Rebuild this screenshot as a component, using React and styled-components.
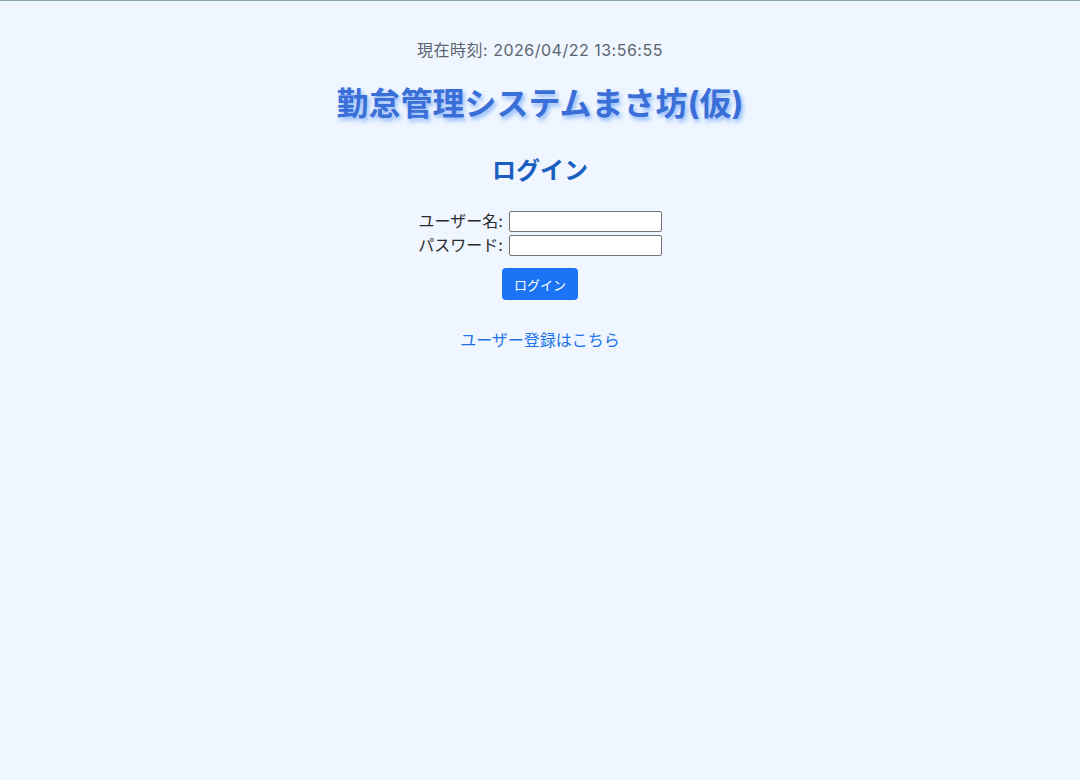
import React from "react";
import styled, { createGlobalStyle } from "styled-components";

const GlobalStyle = createGlobalStyle`
  html, body {
    margin: 0;
    padding: 0;
    background: #eff6ff;
  }
  body {
    font-family: Inter, "Noto Sans CJK JP", sans-serif;
    color: #222;
    border-top: 1px solid #8aa4ad;
    min-height: 779px;
  }
`;

const Page = styled.main`
  display: flex;
  flex-direction: column;
  align-items: center;
  padding-top: 37px;
  text-align: center;
`;

const Clock = styled.p`
  margin: 0;
  font-size: 16px;
  line-height: 24px;
  letter-spacing: 0.5px;
  color: #5b6470;
`;

const Title = styled.h1`
  margin: 20px 0 0;
  font-size: 32px;
  line-height: 44px;
  font-weight: 700;
  color: #3a6fd8;
  text-shadow: 2px 3px 4px rgba(59, 130, 246, 0.55);
`;

const Heading = styled.h2`
  margin: 29px 0 0;
  font-size: 24px;
  line-height: 32px;
  font-weight: 700;
  color: #1a5fbf;
`;

const Form = styled.form`
  display: flex;
  flex-direction: column;
  align-items: center;
  margin-top: 24px;
`;

const Fields = styled.div`
  display: grid;
  grid-template-columns: auto auto;
  column-gap: 6px;
  row-gap: 3px;
  align-items: center;
`;

const Label = styled.label`
  font-size: 16px;
  line-height: 21px;
  text-align: right;
  color: #2a2a2a;
`;

const Input = styled.input`
  box-sizing: border-box;
  width: 153px;
  height: 21px;
  margin: 0;
  padding: 1px 2px;
  border: 1px solid #767676;
  border-radius: 2px;
  background: #fff;
  font: inherit;
  font-size: 13px;
`;

const Button = styled.button`
  margin-top: 12px;
  width: 76px;
  height: 32px;
  border: none;
  border-radius: 4px;
  background: #1b74f6;
  color: #fff;
  font-family: inherit;
  font-size: 13px;
  cursor: pointer;
`;

const RegisterLink = styled.a`
  margin-top: 28px;
  font-size: 16px;
  line-height: 24px;
  color: #1c72e8;
  text-decoration: none;
`;

export default function App() {
  const now = "2026/04/22 13:56:55";

  return (
    <>
      <GlobalStyle />
      <Page>
        <Clock>現在時刻: {now}</Clock>
        <Title>勤怠管理システムまさ坊(仮)</Title>
        <Heading>ログイン</Heading>
        <Form onSubmit={(e) => e.preventDefault()}>
          <Fields>
            <Label htmlFor="username">ユーザー名:</Label>
            <Input id="username" type="text" />
            <Label htmlFor="password">パスワード:</Label>
            <Input id="password" type="password" />
          </Fields>
          <Button type="submit">ログイン</Button>
        </Form>
        <RegisterLink href="#register">ユーザー登録はこちら</RegisterLink>
      </Page>
    </>
  );
}
